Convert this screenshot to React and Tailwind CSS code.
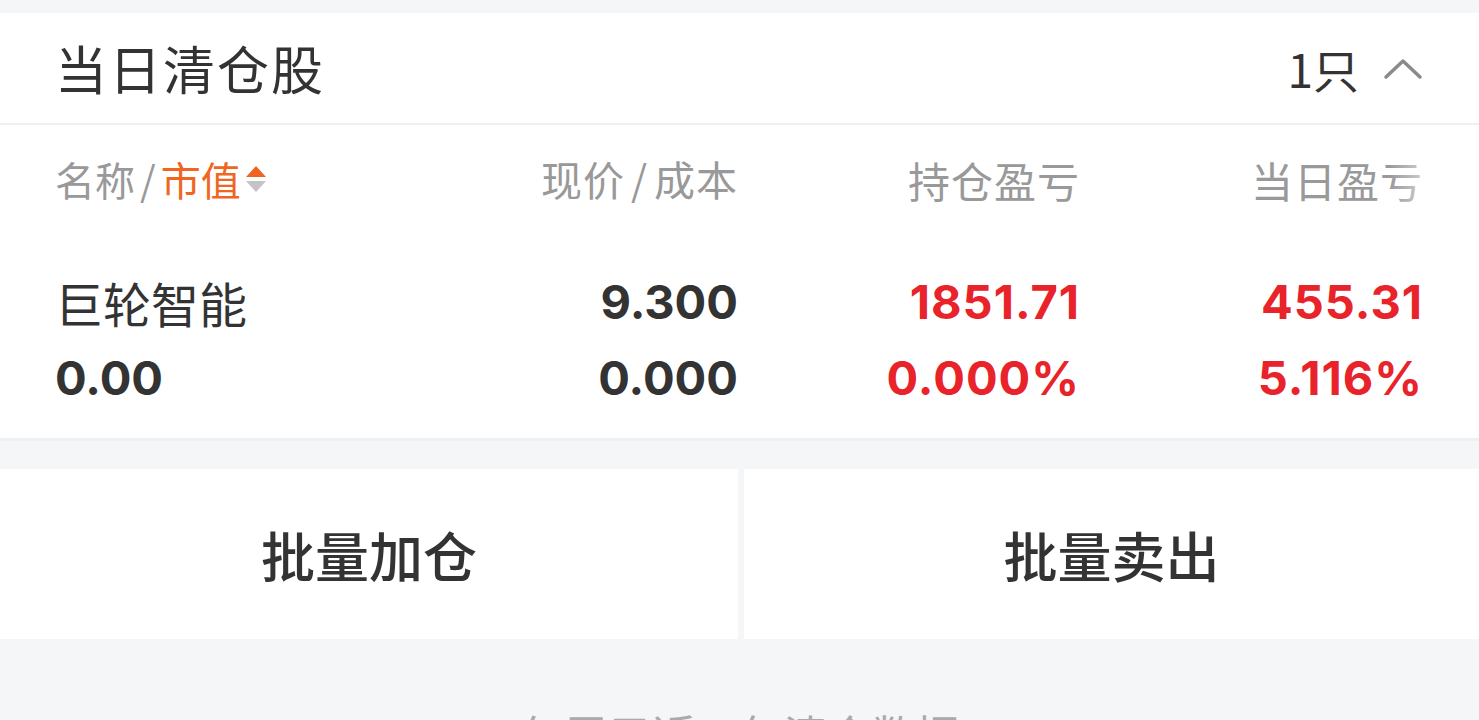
const cjk = "font-['Noto_Sans_CJK_SC',sans-serif]";
const num = "font-['Inter','Noto_Sans_CJK_SC',sans-serif]";

function SortIcon() {
  return (
    <svg width="26" height="34" viewBox="0 0 26 34" className="ml-[2px]">
      <path d="M3 15 L13 4 L23 15 Z" fill="#f0661e" />
      <path d="M3 19 L13 30 L23 19 Z" fill="#c4c4c4" />
    </svg>
  );
}

function ChevronUp() {
  return (
    <svg width="40" height="26" viewBox="0 0 40 26" fill="none">
      <path d="M3 22 L20 6 L37 22" stroke="#8a8a8a" strokeWidth="3.5" strokeLinecap="round" strokeLinejoin="round" />
    </svg>
  );
}

const rows = [
  { name: "巨轮智能", price: "9.300", hold: "1851.71", today: "455.31" },
];

export default function App() {
  return (
    <div className="w-[1479px] h-[720px] overflow-hidden bg-[#f5f6f8] pt-[13px]">
      <div className="bg-white border-b-[3px] border-[#eef0f2]">
        <div className="h-[110px] flex items-center justify-between pl-[55px] pr-[56px]">
          <span className={`${cjk} text-[52px] tracking-[2px] text-[#333]`}>当日清仓股</span>
          <div className="flex items-center gap-[24px]">
            <span className={`${cjk} text-[46px] text-[#333]`}>1只</span>
            <ChevronUp />
          </div>
        </div>
        <div className="h-[2px] bg-[#f0f0f0]" />

        <div className="relative grid grid-cols-[340px_343px_342px_343px] pl-[55px] h-[108px] items-center text-[#999]">
          <div className={`${cjk} text-[40px] flex items-center`}>
            <span>名称</span>
            <span className="mx-[5px]">/</span>
            <span className="text-[#f0661e]">市值</span>
            <SortIcon />
          </div>
          <div className={`${cjk} text-[41px] tracking-[1px] text-right`}>
            现价<span className="mx-[6px]">/</span>成本
          </div>
          <div className={`${cjk} text-[42px] tracking-[1px] text-right`}>持仓盈亏</div>
          <div className={`${cjk} text-[42px] tracking-[1px] text-right`}>当日盈亏</div>
          <div className="absolute right-[30px] top-0 h-full w-[60px] bg-gradient-to-r from-white/0 to-white/90" />
        </div>

        {rows.map((r) => (
          <div key={r.name} className="grid grid-cols-[340px_343px_342px_343px] pl-[55px] pt-[32px] pb-[21px]">
            <div className="flex flex-col">
              <span className={`${cjk} text-[48px] leading-[74px] text-[#333]`}>{r.name}</span>
              <span className={`${num} text-[47px] leading-[78px] font-bold text-[#333]`}>0.00</span>
            </div>
            <div className="flex flex-col items-end">
              <span className={`${num} text-[47px] leading-[74px] font-bold text-[#333]`}>{r.price}</span>
              <span className={`${num} text-[47px] leading-[78px] font-bold text-[#333]`}>0.000</span>
            </div>
            <div className="flex flex-col items-end">
              <span className={`${num} text-[47px] leading-[74px] font-bold tracking-[1px] text-[#e8232a]`}>{r.hold}</span>
              <span className={`${num} text-[47px] leading-[78px] font-bold tracking-[1px] text-[#e8232a]`}>0.000%</span>
            </div>
            <div className="flex flex-col items-end">
              <span className={`${num} text-[47px] leading-[74px] font-bold tracking-[1px] text-[#e8232a]`}>{r.today}</span>
              <span className={`${num} text-[47px] leading-[78px] font-bold tracking-[1px] text-[#e8232a]`}>5.116%</span>
            </div>
          </div>
        ))}
      </div>

      <div className="mt-[28px] flex h-[170px] gap-[6px]">
        <button className={`${cjk} w-[738px] bg-white text-[54px] font-medium text-[#333]`}>批量加仓</button>
        <button className={`${cjk} flex-1 bg-white text-[54px] font-medium text-[#333]`}>批量卖出</button>
      </div>

      <div className={`${cjk} pt-[62px] text-center text-[44px] text-[#aaa]`}>仅展示近一年清仓数据</div>
    </div>
  );
}
